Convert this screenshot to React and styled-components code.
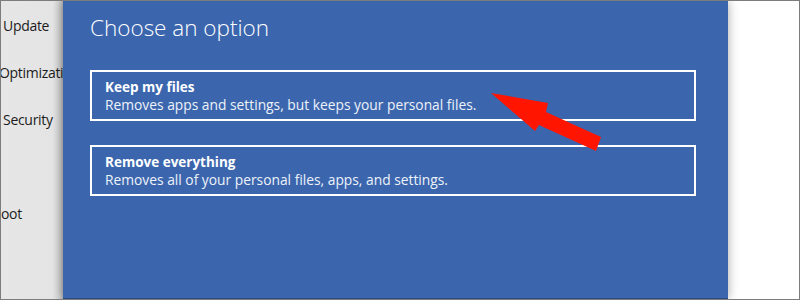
import React from "react";
import styled, { createGlobalStyle } from "styled-components";

const GlobalStyle = createGlobalStyle`
  html, body {
    margin: 0;
    padding: 0;
    background: #ffffff;
  }
  body {
    font-family: "Open Sans", "Noto Sans", sans-serif;
  }
`;

// the bits of the settings sidebar that peek out from under the blue panel
const sideItems = [
  { text: "Update", shift: 2 },
  { text: "Optimization", shift: -2 },
  { text: "Security", shift: 2 },
  { text: "", shift: 0 },
  { text: "oot", shift: 0 },
];

const options = [
  {
    title: "Keep my files",
    desc: "Removes apps and settings, but keeps your personal files.",
  },
  {
    title: "Remove everything",
    desc: "Removes all of your personal files, apps, and settings.",
  },
];

const App = () => {
  return (
    <>
      <GlobalStyle />
      <Frame>
        <Sidebar>
          {sideItems.map((item, i) => (
            <SideItem key={i} $shift={item.shift}>
              {item.text}
            </SideItem>
          ))}
        </Sidebar>
        <Panel>
          <Title>Choose an option</Title>
          <OptionList>
            {options.map((opt) => (
              <Option key={opt.title}>
                <OptionTitle>{opt.title}</OptionTitle>
                <OptionDesc>{opt.desc}</OptionDesc>
              </Option>
            ))}
          </OptionList>
        </Panel>
        <Backdrop />
        <Arrow viewBox="0 0 800 300" width="800" height="300">
          <polygon
            points="491,93 548,103 546,112 601,137 596,151 539,125 535,131"
            fill="#ff1500"
          />
        </Arrow>
      </Frame>
    </>
  );
};

const Frame = styled.div`
  position: relative;
  display: flex;
  width: 800px;
  height: 300px;
  box-sizing: border-box;
  border: 1px solid #7c7c7c;
  overflow: hidden;
`;

const Sidebar = styled.div`
  width: 62px;
  flex-shrink: 0;
  display: flex;
  flex-direction: column;
  padding-top: 15px;
  overflow: hidden;
  background: linear-gradient(
    to right,
    #e6e6e6 0,
    #e4e4e4 52px,
    #d2d2d2 58px,
    #b8b8b8 62px
  );
`;

const SideItem = styled.div`
  height: 47px;
  flex-shrink: 0;
  margin-left: ${(p) => p.$shift}px;
  font-family: "Open Sans", "Noto Sans", sans-serif;
  font-size: 14px;
  letter-spacing: -0.3px;
  line-height: 20px;
  color: #1b1b1b;
  white-space: nowrap;
`;

const Panel = styled.div`
  position: relative;
  z-index: 1;
  width: 665px;
  flex-shrink: 0;
  box-sizing: border-box;
  padding: 12px 32px 0 27px;
  background: #3b66ae;
  box-shadow: 0 0 10px rgba(0, 0, 0, 0.35);
  border-bottom: 1px solid #2a4a80;
`;

const Title = styled.h1`
  margin: 0;
  font-family: "Open Sans", "Noto Sans", sans-serif;
  font-weight: 300;
  font-size: 22.5px;
  line-height: 30px;
  color: #ffffff;
`;

const OptionList = styled.div`
  display: flex;
  flex-direction: column;
  gap: 24px;
  margin-top: 27px;
`;

const Option = styled.div`
  height: 51px;
  box-sizing: border-box;
  border: 2px solid #ffffff;
  padding: 6px 13px 0;
  display: flex;
  flex-direction: column;
`;

const OptionTitle = styled.div`
  font-family: "Open Sans", "Noto Sans", sans-serif;
  font-weight: 700;
  font-size: 13.5px;
  line-height: 18px;
  color: #ffffff;
`;

const OptionDesc = styled.div`
  font-family: "Open Sans", "Noto Sans", sans-serif;
  font-size: 13.8px;
  line-height: 18px;
  color: #eef2f9;
  white-space: nowrap;
`;

const Backdrop = styled.div`
  flex: 1;
`;

const Arrow = styled.svg`
  position: absolute;
  left: -1px;
  top: -1px;
  z-index: 2;
  pointer-events: none;
`;

export default App;
